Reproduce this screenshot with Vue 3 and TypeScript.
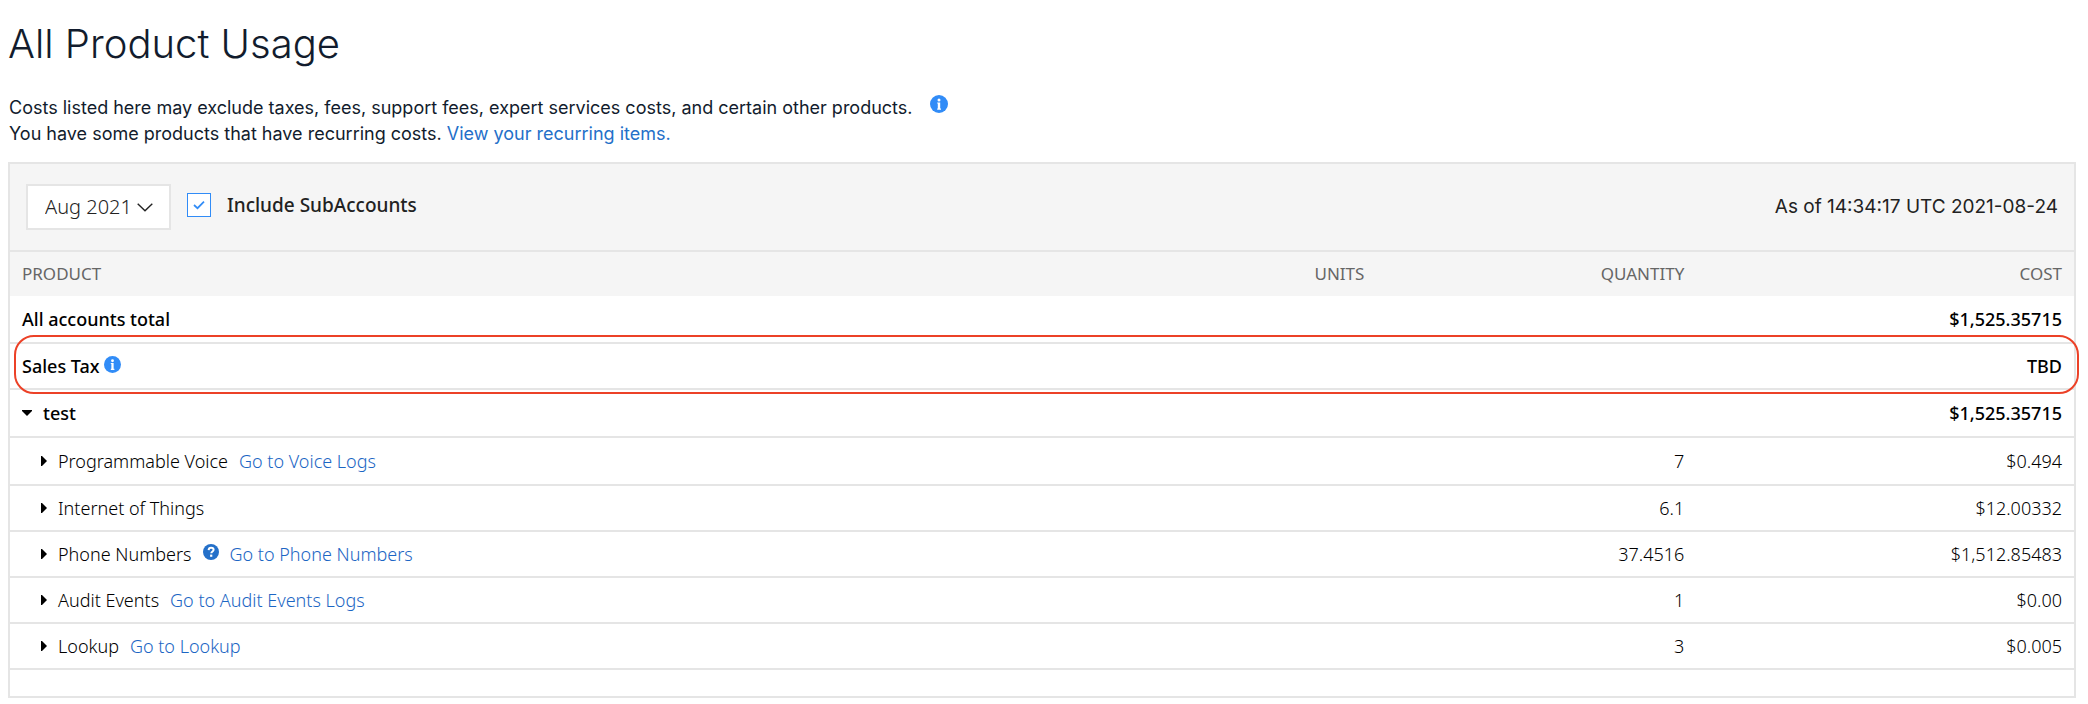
<script setup lang="ts">
import { ref } from 'vue'

interface UsageRow {
  name: string
  quantity: string
  cost: string
  link?: string
  help?: boolean
}

const includeSubAccounts = ref(true)
const month = ref('Aug 2021')
const expanded = ref(true)

const rows: UsageRow[] = [
  { name: 'Programmable Voice', link: 'Go to Voice Logs', quantity: '7', cost: '$0.494' },
  { name: 'Internet of Things', quantity: '6.1', cost: '$12.00332' },
  { name: 'Phone Numbers', link: 'Go to Phone Numbers', help: true, quantity: '37.4516', cost: '$1,512.85483' },
  { name: 'Audit Events', link: 'Go to Audit Events Logs', quantity: '1', cost: '$0.00' },
  { name: 'Lookup', link: 'Go to Lookup', quantity: '3', cost: '$0.005' },
]
</script>

<template>
  <main class="page">
    <h1>All Product Usage</h1>
    <div class="intro">
      <p>
        Costs listed here may exclude taxes, fees, support fees, expert services costs, and certain other products.
        <svg class="info-large" viewBox="0 0 18 18" role="img" aria-label="More information">
          <circle cx="9" cy="9" r="9" fill="#318cf7" />
          <circle cx="9" cy="5" r="1.500" fill="#fff" />
          <path d="M7.200 7.400h3v6.200h.8v1.200H7.200v-1.200h.6V8.600h-.6z" fill="#fff" />
        </svg>
      </p>
      <p>You have some products that have recurring costs. <a href="#recurring">View your recurring items.</a></p>
    </div>

    <section class="panel">
      <div class="toolbar">
        <label class="month">
          <select v-model="month" aria-label="Month">
            <option>Aug 2021</option>
          </select>
          <svg viewBox="0 0 16 9" aria-hidden="true">
            <path d="M.7.8 8 7.8 15.3.8" fill="none" stroke="#222" stroke-width="1.4" />
          </svg>
        </label>
        <label class="check">
          <span class="box">
            <input v-model="includeSubAccounts" type="checkbox" />
            <svg v-if="includeSubAccounts" viewBox="0 0 24 24" aria-hidden="true">
              <path d="M7 12 10.500 15.200 17 8.600" fill="none" stroke="#318cf7" stroke-width="1.700" />
            </svg>
          </span>
          <span>Include SubAccounts</span>
        </label>
        <span class="as-of">As of 14:34:17 UTC 2021-08-24</span>
      </div>

      <table>
        <colgroup>
          <col class="col-product" />
          <col class="col-units" />
          <col class="col-quantity" />
          <col class="col-cost" />
        </colgroup>
        <thead>
          <tr>
            <th scope="col">PRODUCT</th>
            <th scope="col">UNITS</th>
            <th scope="col">QUANTITY</th>
            <th scope="col">COST</th>
          </tr>
        </thead>
        <tbody>
          <tr class="total">
            <td>All accounts total</td>
            <td></td>
            <td></td>
            <td>$1,525.35715</td>
          </tr>
          <tr class="total tax">
            <td>
              <span class="highlight" aria-hidden="true"></span>
              <div class="cell tight">
                <span>Sales Tax</span>
                <svg class="info" viewBox="0 0 18 18" role="img" aria-label="About sales tax">
                  <circle cx="9" cy="9" r="9" fill="#318cf7" />
                  <circle cx="9" cy="5" r="1.500" fill="#fff" />
                  <path d="M7.200 7.400h3v6.200h.8v1.200H7.200v-1.200h.6V8.600h-.6z" fill="#fff" />
                </svg>
              </div>
            </td>
            <td></td>
            <td></td>
            <td>TBD</td>
          </tr>
          <tr class="total">
            <td>
              <button type="button" class="toggle" :aria-expanded="expanded" @click="expanded = !expanded">
                <svg class="down" viewBox="0 0 10 6" aria-hidden="true"><path d="M0 0h10v1L5 6 0 1z" /></svg>
                <span>test</span>
              </button>
            </td>
            <td></td>
            <td></td>
            <td>$1,525.35715</td>
          </tr>
          <template v-if="expanded">
            <tr v-for="(row, index) in rows" :key="row.name" :class="{ lead: index === 0 }">
              <td>
                <div class="cell product">
                  <button type="button" class="toggle">
                    <svg class="right" viewBox="0 0 6 10" aria-hidden="true"><path d="M0 0h1l5 5-5 5H0z" /></svg>
                    <span>{{ row.name }}</span>
                  </button>
                  <svg v-if="row.help" class="help" viewBox="0 0 16 16" role="img" aria-label="Help">
                    <circle cx="8" cy="8" r="8" fill="#2470c9" />
                    <path d="M5.600 6.100C5.700 4.500 6.700 3.700 8.100 3.700c1.500 0 2.500.8 2.500 2.100 0 1.700-2.300 1.700-2.300 3.500" fill="none" stroke="#fff" stroke-width="2" />
                    <rect x="7.100" y="10.600" width="2.200" height="2.200" fill="#fff" />
                  </svg>
                  <a v-if="row.link" href="#details">{{ row.link }}</a>
                </div>
              </td>
              <td></td>
              <td>{{ row.quantity }}</td>
              <td>{{ row.cost }}</td>
            </tr>
          </template>
        </tbody>
      </table>
    </section>
  </main>
</template>

<style>
body {
  margin: 0;
  background: #fff;
}
</style>

<style scoped>
.page {
  padding: 20px 12px 6px 8px;
  color: #121c2d;
  font-family: Inter, "Liberation Sans", sans-serif;
}

h1 {
  margin: 0;
  font-size: 40px;
  font-weight: 300;
  line-height: 48px;
}

.intro {
  margin: 27px 0 15px;
  padding-left: 1px;
  font-size: 18px;
  font-weight: 400;
  line-height: 26px;
}

p {
  display: flex;
  gap: 5px;
  margin: 0;
}

a {
  color: #2470c9;
  text-decoration: none;
}

.info {
  width: 17px;
  height: 17px;
  margin-bottom: 4px;
}

.info-large {
  width: 18px;
  height: 18px;
  margin-left: 12px;
}

.panel {
  padding-bottom: 26px;
  border: 2px solid #e5e5e5;
  color: #000;
  font-family: "Noto Sans", "Open Sans", sans-serif;
  font-size: 18px;
  line-height: 26px;
}

.toolbar {
  display: flex;
  align-items: center;
  gap: 16px;
  height: 86px;
  padding: 0 16px;
  border-bottom: 2px solid #e5e5e5;
  background: #f5f5f5;
  color: #222;
}

.month {
  position: relative;
  display: flex;
  align-items: center;
  font-size: 20px;
  font-weight: 300;
}

.month svg {
  position: absolute;
  right: 18px;
  width: 16px;
  height: 9px;
  pointer-events: none;
}

select {
  height: 46px;
  padding: 0 37px 0 17px;
  border: 2px solid #e5e5e5;
  border-radius: 0;
  background: #fff;
  color: inherit;
  font: inherit;
  appearance: none;
}

.check {
  display: flex;
  align-items: center;
  gap: 16px;
  padding-bottom: 4px;
  font-size: 19px;
  font-weight: 500;
}

.box {
  position: relative;
  display: flex;
}

.box svg {
  position: absolute;
  inset: 0;
  pointer-events: none;
}

input {
  width: 24px;
  height: 24px;
  margin: 0;
  border: 1px solid #318cf7;
  background: #fff;
  appearance: none;
}

.as-of {
  margin-left: auto;
  font-family: Inter, "Liberation Sans", sans-serif;
  font-size: 19px;
}

table {
  width: 100%;
  border-collapse: separate;
  border-spacing: 0;
  table-layout: fixed;
}

.col-product {
  width: 50%;
}

.col-units {
  width: 16.2%;
}

.col-quantity {
  width: 15.5%;
}

.col-cost {
  width: 18.3%;
}

th {
  height: 44px;
  padding: 0 12px;
  background: #f5f5f5;
  color: #666;
  font-size: 17px;
  font-weight: 400;
  text-align: right;
}

td {
  height: 44px;
  padding: 0 12px;
  border-bottom: 2px solid #e5e5e5;
  font-weight: 300;
  text-align: right;
}

th:first-child,
td:first-child {
  text-align: left;
}

.total td,
.lead td {
  height: 46px;
}

.total td {
  font-weight: 500;
}

.total.tax td {
  height: 44px;
}

.tax {
  position: relative;
}

.highlight {
  position: absolute;
  inset: -9px -5px -4px 4px;
  border: 2px solid #ec4127;
  border-radius: 20px;
  pointer-events: none;
}

.cell {
  display: flex;
  align-items: center;
  gap: 11px;
}

.cell a {
  color: #1c66c4;
}

.tight {
  gap: 4px;
}

.product {
  padding-left: 19px;
}

.toggle {
  display: flex;
  align-items: center;
  gap: 11px;
  padding: 0;
  border: 0;
  background: none;
  color: inherit;
  font: inherit;
}

.down {
  width: 10px;
  height: 6px;
}

.right {
  width: 6px;
  height: 10px;
}

.help {
  width: 16px;
  height: 16px;
  margin-bottom: 4px;
}
</style>
